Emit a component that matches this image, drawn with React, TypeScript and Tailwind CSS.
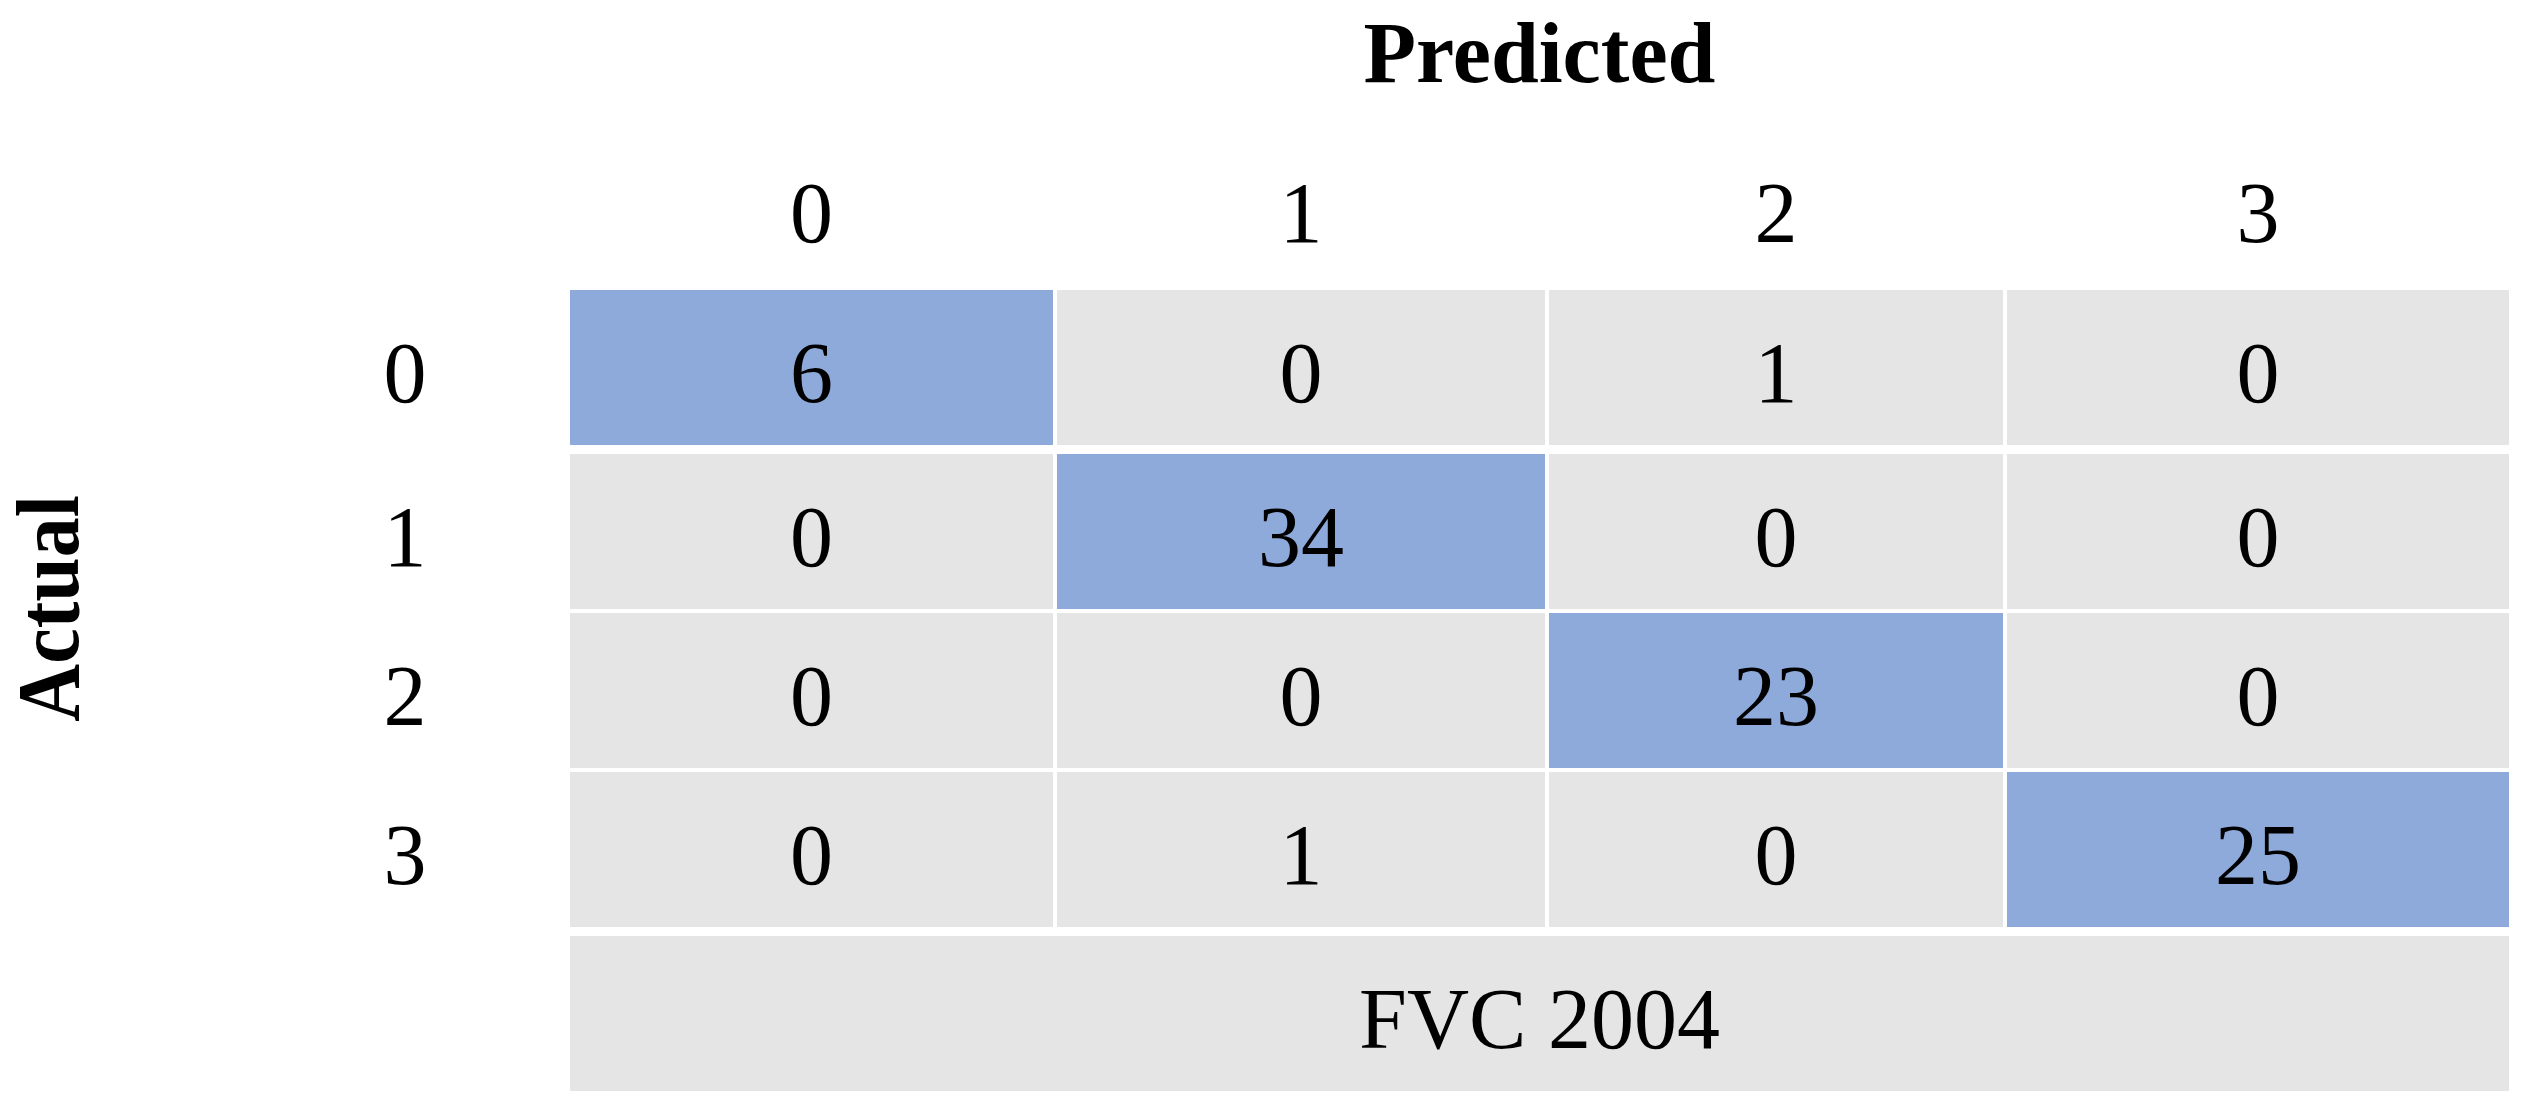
const matrix = [
  [6, 0, 1, 0],
  [0, 34, 0, 0],
  [0, 0, 23, 0],
  [0, 1, 0, 25],
];

const colWidths = ['w-[483px]', 'w-[488px]', 'w-[454px]', 'w-[502px]'];
const rowGaps = ['', 'mt-[9px]', 'mt-[4px]', 'mt-[4px]'];

export default function App() {
  return (
    <div
      className="w-[2532px] h-[1109px] bg-white text-black pt-[10px] overflow-hidden"
      style={{ fontFamily: '"Liberation Serif", "Times New Roman", serif' }}
    >
      {/* Title */}
      <div className="pl-[570px] w-[2509px] text-center text-[86px] leading-none font-bold h-[86px]">
        Predicted
      </div>

      {/* Column headers */}
      <div className="pl-[570px] mt-[74px] flex gap-[4px] text-[86px] leading-none">
        {colWidths.map((w, i) => (
          <div key={i} className={`${w} text-center`}>
            {i}
          </div>
        ))}
      </div>

      {/* Body */}
      <div className="mt-[34px] flex">
        <div className="w-[570px] flex items-start">
          <div className="w-[96px] h-[637px] flex items-center justify-center">
            <div className="scale-x-[1.12]">
              <div className="[writing-mode:vertical-rl] rotate-180 text-[80px] leading-none font-bold">
                Actual
              </div>
            </div>
          </div>
          <div className="ml-[234px] w-[150px] flex flex-col text-[86px] leading-none">
            {matrix.map((_, r) => (
              <div key={r} className={`${rowGaps[r]} h-[155px] flex items-center justify-center pt-[10px]`}>
                {r}
              </div>
            ))}
          </div>
        </div>

        <div className="flex flex-col text-[86px] leading-none">
          {matrix.map((row, r) => (
            <div key={r} className={`${rowGaps[r]} flex gap-[4px]`}>
              {row.map((v, c) => (
                <div
                  key={c}
                  className={`${colWidths[c]} h-[155px] flex items-center justify-center pt-[10px] ${
                    r === c ? 'bg-[#8eaadb]' : 'bg-[#e5e5e5]'
                  }`}
                >
                  {v}
                </div>
              ))}
            </div>
          ))}
          <div className="mt-[9px] w-[1939px] h-[155px] bg-[#e5e5e5] flex items-center justify-center pt-[10px]">
            FVC 2004
          </div>
        </div>
      </div>
    </div>
  );
}
